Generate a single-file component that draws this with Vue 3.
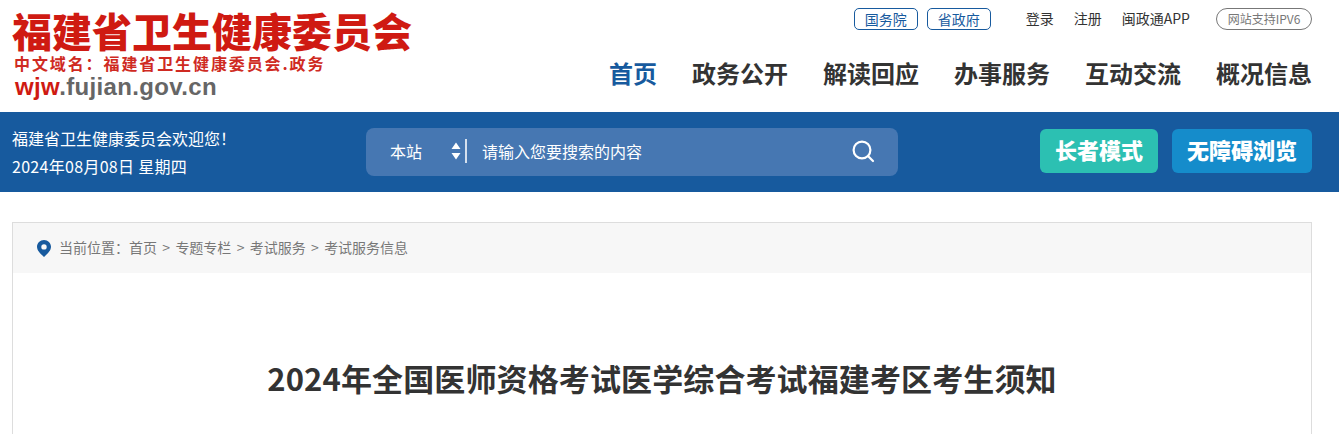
<template>
  <div class="page">
    <header class="head">
      <div class="logo">
        <div class="logo-title">福建省卫生健康委员会</div>
        <div class="logo-domain">中文域名：福建省卫生健康委员会.政务</div>
        <div class="logo-url"><span class="red">wjw</span>.fujian.gov.cn</div>
      </div>
      <div class="head-right">
        <div class="top-links">
          <a class="pill" v-for="item in pills" :key="item">{{ item }}</a>
          <div class="links">
            <a v-for="item in links" :key="item">{{ item }}</a>
          </div>
          <span class="ipv6">网站支持IPV6</span>
        </div>
        <nav class="nav">
          <a
            v-for="(item, i) in navs"
            :key="item"
            :class="{ active: i === 0 }"
          >{{ item }}</a>
        </nav>
      </div>
    </header>

    <div class="bar">
      <div class="welcome">
        <div>福建省卫生健康委员会欢迎您！</div>
        <div class="date">2024年08月08日 星期四</div>
      </div>
      <div class="search">
        <span class="scope">本站</span>
        <svg class="arrows" width="10" height="18" viewBox="0 0 10 18">
          <path d="M5 0.5 L9.5 7 H0.5 Z M0.5 11 H9.5 L5 17.5 Z" fill="#fff" />
        </svg>
        <span class="divider"></span>
        <span class="placeholder">请输入您要搜索的内容</span>
        <svg class="glass" width="24" height="24" viewBox="0 0 24 24" fill="none" stroke="#fff" stroke-width="2.2">
          <circle cx="11" cy="11" r="8.4" />
          <path d="M17 17 L22 22" stroke-linecap="round" />
        </svg>
      </div>
      <div class="bar-btns">
        <a class="btn green">长者模式</a>
        <a class="btn blue">无障碍浏览</a>
      </div>
    </div>

    <main class="box">
      <div class="crumb">
        <svg width="14" height="17" viewBox="0 0 14 17">
          <path
            fill-rule="evenodd"
            fill="#175a9e"
            d="M7 0 C3.1 0 0 3 0 6.8 C0 11 4.4 14.6 7 17 C9.6 14.6 14 11 14 6.8 C14 3 10.9 0 7 0 Z M7 4.2 A2.7 2.7 0 1 1 7 9.6 A2.7 2.7 0 1 1 7 4.2 Z"
          />
        </svg>
        <div class="crumb-text">
          <span>当前位置：</span>
          <template v-for="(item, i) in crumbs" :key="item">
            <span v-if="i > 0" class="sep">&gt;</span>
            <span>{{ item }}</span>
          </template>
        </div>
      </div>
      <h1 class="title">2024年全国医师资格考试医学综合考试福建考区考生须知</h1>
    </main>
  </div>
</template>

<script setup>
const pills = ["国务院", "省政府"];
const links = ["登录", "注册", "闽政通APP"];
const navs = ["首页", "政务公开", "解读回应", "办事服务", "互动交流", "概况信息"];
const crumbs = ["首页", "专题专栏", "考试服务", "考试服务信息"];
</script>

<style>
html,
body {
  margin: 0;
  background: #fff;
  overflow: hidden;
}
</style>

<style scoped>
.page {
  height: 434px;
  overflow: hidden;
  font-family: "Noto Sans CJK SC", "Liberation Sans", sans-serif;
  color: #333;
}

.head {
  height: 112px;
  display: flex;
  justify-content: space-between;
  padding: 0 27px 0 12px;
}

.logo {
  padding-top: 8px;
}

.logo-title {
  font-size: 40px;
  line-height: 44px;
  font-weight: 900;
  color: #cf1a12;
  white-space: nowrap;
}

.logo-domain {
  margin: 1px 0 0 2px;
  font-size: 16px;
  line-height: 20px;
  font-weight: 700;
  letter-spacing: 1.9px;
  color: #cf2a22;
  white-space: nowrap;
}

.logo-url {
  margin: 1px 0 0 3px;
  font-family: "Liberation Sans", sans-serif;
  font-size: 24px;
  line-height: 26px;
  font-weight: 700;
  letter-spacing: 0.35px;
  color: #666;
}

.red {
  color: #cf1a12;
}

.head-right {
  display: flex;
  flex-direction: column;
  align-items: flex-end;
}

.top-links {
  display: flex;
  align-items: center;
  height: 22px;
  margin-top: 8px;
  font-size: 14px;
}

.pill {
  width: 64px;
  height: 22px;
  margin-right: 9px;
  box-sizing: border-box;
  border: 1px solid #175a9e;
  border-radius: 5px;
  line-height: 20px;
  text-align: center;
  color: #175a9e;
}

.links {
  display: flex;
  gap: 20px;
  margin: -2px 26px 0 26px;
  color: #333;
}

.ipv6 {
  width: 96px;
  height: 22px;
  box-sizing: border-box;
  border: 1px solid #777;
  border-radius: 11px;
  line-height: 20px;
  text-align: center;
  font-size: 12px;
  color: #777;
  white-space: nowrap;
}

.nav {
  display: flex;
  gap: 35px;
  margin-top: 26px;
  font-size: 24px;
  line-height: 34px;
  font-weight: 700;
}

.active {
  color: #175a9e;
}

.bar {
  height: 80px;
  display: flex;
  align-items: center;
  padding: 0 27px 0 12px;
  background: #175a9e;
  color: #fff;
}

.welcome {
  width: 354px;
  font-size: 16px;
  line-height: 28px;
}

.date {
  letter-spacing: 0.3px;
}

.search {
  width: 532px;
  height: 48px;
  display: flex;
  align-items: center;
  box-sizing: border-box;
  padding: 0 23px 2px 24px;
  border-radius: 8px;
  background: #4677b2;
  font-size: 16px;
}

.scope {
  width: 61px;
}

.arrows {
  margin-right: 4px;
}

.divider {
  width: 2px;
  height: 24px;
  margin-right: 15px;
  background: #d5e0ee;
}

.placeholder {
  flex: 1;
}

.bar-btns {
  display: flex;
  gap: 14px;
  margin: -2px 0 0 auto;
}

.btn {
  height: 44px;
  border-radius: 6px;
  font-size: 22px;
  line-height: 41px;
  font-weight: 900;
  text-align: center;
}

.green {
  width: 118px;
  background: #2cc0b2;
}

.blue {
  width: 140px;
  background: #158ccb;
}

.box {
  height: 300px;
  margin: 30px 27px 0 12px;
  border: 1px solid #ddd;
}

.crumb {
  height: 50px;
  display: flex;
  align-items: center;
  gap: 8px;
  padding-left: 24px;
  background: #f7f7f7;
  font-size: 14px;
  color: #777;
}

.crumb-text {
  display: flex;
  margin-top: -2px;
}

.sep {
  margin: 0 5.3px;
}

.title {
  margin: 80px 0 0;
  font-size: 31px;
  line-height: 50px;
  font-weight: 700;
  letter-spacing: 0.12px;
  text-align: center;
  color: #333;
}
</style>
